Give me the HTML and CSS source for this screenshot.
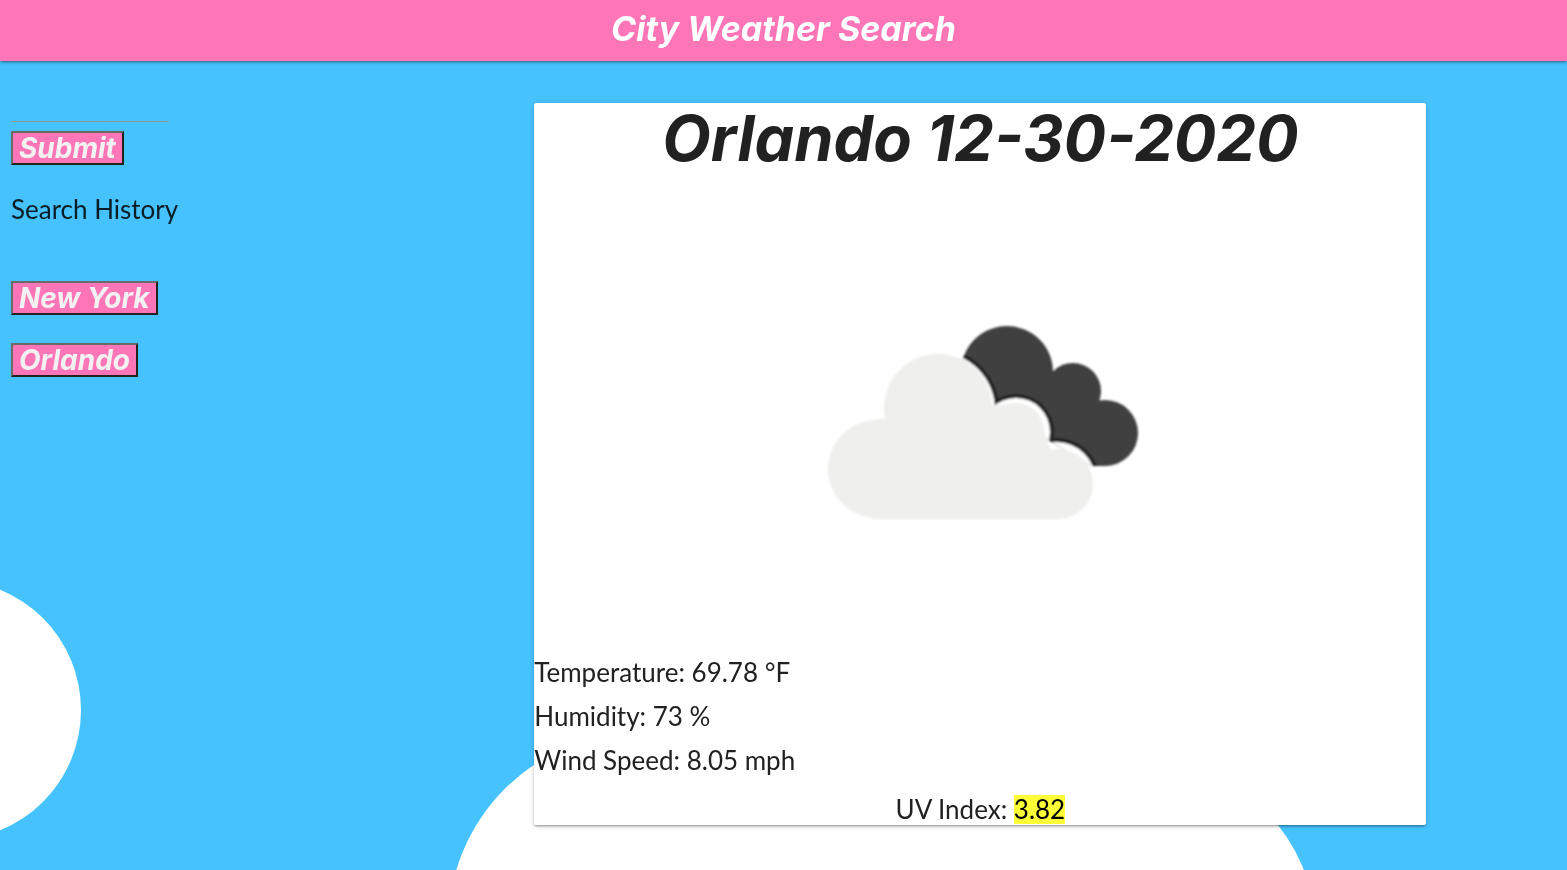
FILE: index.html
```html
<!DOCTYPE html>
<html lang="en">
<head>
<meta charset="utf-8">
<title>City Weather Search</title>
<link rel="stylesheet" href="styles.css">
</head>
<body>
<svg class="sky" viewBox="0 0 1567 870" preserveAspectRatio="xMidYMax slice" aria-hidden="true">
  <circle cx="-49" cy="710" r="130"/>
  <circle cx="642" cy="926" r="194"/>
  <circle cx="1148" cy="930" r="167"/>
  <rect x="534" y="810" width="730" height="60"/>
</svg>
<header class="navbar"><h1 class="brand">City Weather Search</h1></header>
<main class="row">
  <aside class="sidebar">
    <form class="search">
      <input class="city-input" type="text" aria-label="City">
      <button class="btn" type="button">Submit</button>
    </form>
    <h2 class="history-title">Search History</h2>
    <div class="history">
      <button class="btn" type="button">New York</button>
      <button class="btn" type="button">Orlando</button>
    </div>
  </aside>
  <section class="card">
    <h2 class="city">Orlando 12-30-2020</h2>
    <svg class="weather" viewBox="757 200 446 446" role="img" aria-label="Broken clouds">
      <defs>
        <clipPath id="dark-shape">
          <circle cx="1007" cy="372" r="46"/>
          <circle cx="1073" cy="391" r="28"/>
          <circle cx="1105" cy="433" r="33"/>
          <path d="M963 357L1007 372L1073 375L1105 433L1105 466L1091 466L1050 441L994 406Z"/>
        </clipPath>
        <filter id="soften" x="-10%" y="-10%" width="120%" height="120%">
          <feGaussianBlur stdDeviation="1"/>
        </filter>
      </defs>
      <g filter="url(#soften)">
        <g clip-path="url(#dark-shape)">
          <rect x="950" y="320" width="200" height="150" fill="#3f3f41"/>
          <g fill="#222224">
            <circle cx="937" cy="410" r="62"/>
            <circle cx="1016" cy="432" r="38"/>
            <circle cx="1056" cy="482" r="44"/>
          </g>
          <g fill="#fff">
            <circle cx="937" cy="410" r="58"/>
            <circle cx="1016" cy="432" r="34"/>
            <circle cx="1056" cy="482" r="40"/>
          </g>
        </g>
        <g fill="#efefed">
          <circle cx="877" cy="469" r="49"/>
          <circle cx="938" cy="408" r="54"/>
          <circle cx="1016" cy="431" r="28"/>
          <circle cx="1058" cy="484" r="35"/>
          <path d="M872 420L1016 403L1044 431L1050 449L1058 519H872Z"/>
        </g>
      </g>
    </svg>
    <div class="details">
      <p class="detail">Temperature: 69.78 °F</p>
      <p class="detail">Humidity: 73 %</p>
      <p class="detail">Wind Speed: 8.05 mph</p>
    </div>
    <p class="uv">UV Index: <mark class="uv-value">3.82</mark></p>
  </section>
</main>
</body>
</html>
```
FILE: styles.css
```css
* { box-sizing: border-box; }
body {
  margin: 0;
  min-height: 100vh;
  background: #46c3ff;
  color: #212121;
  font: 26px/32px Lato, "Open Sans", sans-serif;
}
h1, h2, p { margin: 0; }
.sky {
  position: fixed;
  inset: 0;
  z-index: -1;
  width: 100%;
  height: 100%;
  fill: #fff;
}
.navbar {
  padding: 6px 0 10px;
  background: #ff76b8;
  box-shadow: 0 2px 2px rgba(0, 0, 0, .14), 0 3px 1px -2px rgba(0, 0, 0, .12), 0 1px 5px rgba(0, 0, 0, .2);
  text-align: center;
}
.brand {
  color: #fff;
  font: italic 700 34px/45px Inter, sans-serif;
}
.row {
  display: grid;
  grid-template-columns: 4fr 7fr 1fr;
  align-items: start;
}
.sidebar { padding: 16px 11px; }
.search {
  display: flex;
  flex-direction: column;
  align-items: flex-start;
  gap: 9px;
}
.city-input {
  width: 158px;
  height: 45px;
  padding: 0;
  border: 0;
  border-bottom: 1px solid #8f9aa0;
  background: transparent;
  font: inherit;
  outline: 0;
}
.btn {
  padding: 0 6px;
  border: 2px outset #212121;
  border-color: #6b6b6b #212121 #212121 #6b6b6b;
  border-style: solid;
  background: #ff76b8;
  color: #f2f2f2;
  font: italic 700 28px/30px Inter, sans-serif;
}
.history-title {
  margin-top: 28px;
  color: #0a1c26;
  font: inherit;
}
.history {
  display: flex;
  flex-direction: column;
  align-items: flex-start;
  gap: 28px;
  margin-top: 56px;
}
.card {
  display: flex;
  flex-direction: column;
  align-items: center;
  margin: 42px 10px 16px 12px;
  border-radius: 2px;
  background: #fff;
  box-shadow: 0 2px 2px rgba(0, 0, 0, .14), 0 3px 1px -2px rgba(0, 0, 0, .12), 0 1px 5px rgba(0, 0, 0, .2);
}
.city { font: italic 700 63px/70px Inter, sans-serif; }
.weather {
  width: 50%;
  margin-top: 27px;
}
.details {
  display: grid;
  gap: 12px;
  align-self: stretch;
  margin-top: 10px;
}
.uv { margin-top: 17px; }
.uv-value {
  display: inline-block;
  background: #ffff38;
  color: #000;
  line-height: 29px;
}
```
